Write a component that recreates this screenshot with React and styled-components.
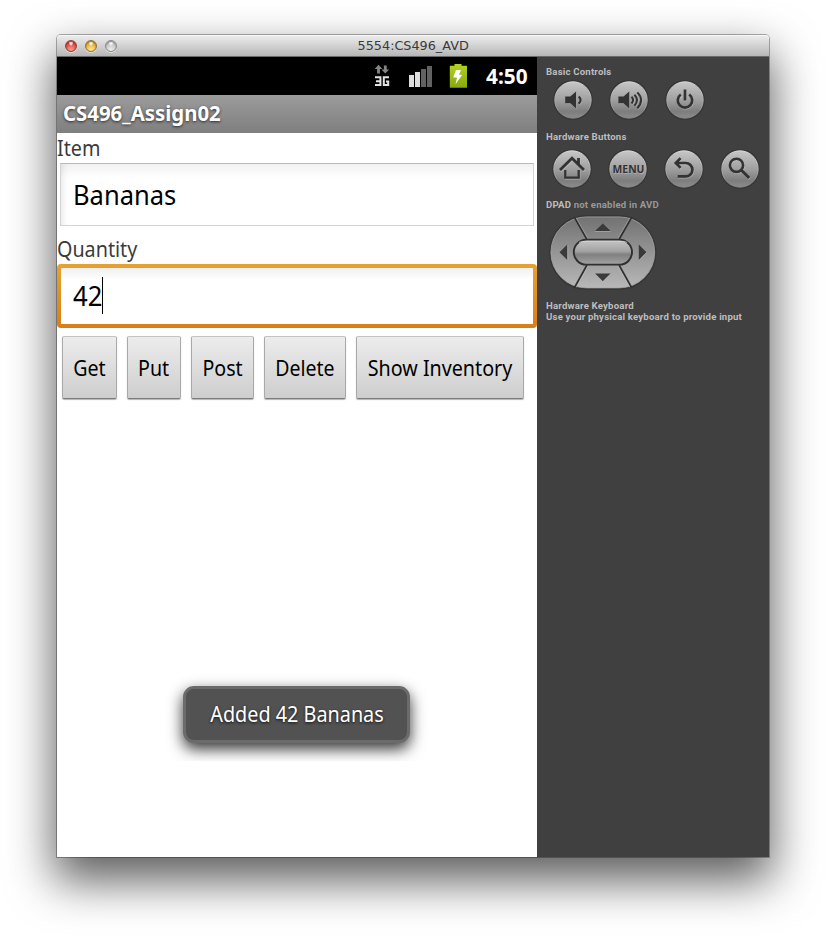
import React from "react";
import styled, { createGlobalStyle } from "styled-components";

const GlobalStyle = createGlobalStyle`
  * { box-sizing: border-box; }
  html, body { margin: 0; background: #fff; }
  body { height: 936px; overflow: hidden; font-family: "Noto Sans", sans-serif; }
`;

const Desktop = styled.main`
  width: 826px;
  height: 936px;
  padding: 35px 57px 0;
  overflow: hidden;
`;

const Window = styled.section`
  width: 712px;
  height: 822px;
  display: flex;
  flex-direction: column;
  border-radius: 4px 4px 0 0;
  box-shadow: 0 0 0 1px rgba(0, 0, 0, 0.3), 0 21px 46px 3px rgba(0, 0, 0, 0.63);
`;

const TitleBar = styled.header`
  flex: none;
  height: 22px;
  display: grid;
  grid-template-columns: 80px 1fr 80px;
  align-items: center;
  border-radius: 4px 4px 0 0;
  border-bottom: 1px solid #6a6a6a;
  background: linear-gradient(#ededed, #d8d8d8 40%, #b6b6b6);
  box-shadow: inset 0 1px 0 #f6f6f6;
`;

const Lights = styled.div`
  display: flex;
  gap: 8px;
  padding-left: 8px;
`;

const Light = styled.i`
  width: 12px;
  height: 12px;
  border-radius: 50%;
  border: 1px solid ${(p) => p.$edge};
  background: radial-gradient(ellipse at 50% 10%, rgba(255, 255, 255, 0.85) 0 18%, transparent 34%),
    radial-gradient(circle at 50% 90%, ${(p) => p.$glow}, ${(p) => p.$tone} 75%);
  box-shadow: 0 1px 0 rgba(255, 255, 255, 0.5), inset 0 1px 1px ${(p) => p.$edge};
`;

const Text = styled.span`
  display: inline-block;
  white-space: pre;
  transform: scaleX(${(p) => p.$stretch || 1});
  transform-origin: ${(p) => p.$origin || "left"} center;
`;

const WindowTitle = styled.div`
  text-align: center;
  font: 12px/20px "DejaVu Sans", sans-serif;
  color: #3a3a3a;
`;

const Body = styled.div`
  flex: 1;
  display: flex;
`;

const Phone = styled.div`
  position: relative;
  width: 480px;
  background: #fff;
`;

const StatusBar = styled.div`
  height: 38px;
  display: flex;
  align-items: center;
  justify-content: flex-end;
  padding-right: 9px;
  background: #000;
`;

const StatusIcons = styled.svg`
  width: 100px;
  height: 38px;
  margin-right: 15px;
`;

const Clock = styled.div`
  width: 42px;
  font: bold 21px/38px "Noto Sans", sans-serif;
  color: #fff;
`;

const AppBar = styled.div`
  height: 38px;
  padding-left: 6px;
  background: linear-gradient(#9b9b9b, #7f7f7f);
  font: bold 21px/36px "Noto Sans", sans-serif;
  color: #fff;
  text-shadow: 0 1px 3px rgba(0, 0, 0, 0.7);
`;

const Label = styled.div`
  height: ${(p) => p.$height}px;
  padding-top: ${(p) => p.$top}px;
  font-size: 21px;
  line-height: 28px;
  color: #3b3b3b;
`;

const Field = styled.div`
  height: 63px;
  margin: 0 3px;
  padding-left: 12px;
  border: 1px solid #d4d4d4;
  border-top-color: #b9b9b9;
  background: linear-gradient(#f1f1f1, #fff 14px);
  box-shadow: inset 8px 0 8px -8px rgba(0, 0, 0, 0.14);
  font-size: 27px;
  line-height: 61px;
  color: #000;
`;

const FocusedField = styled.div`
  display: flex;
  align-items: center;
  height: 64px;
  padding: 4px 4px 4px 16px;
  border-radius: 4px;
  background: linear-gradient(#f0f0f0, #fff 12px) 4px 4px / calc(100% - 8px) calc(100% - 8px) no-repeat,
    linear-gradient(#e6a233, #da7d18);
  font-size: 27px;
  line-height: 54px;
  color: #000;
`;

const Amount = styled.div`
  width: 29px;
`;

const Caret = styled.i`
  width: 1px;
  height: 37px;
  margin-top: -2px;
  background: #000;
`;

const ButtonRow = styled.div`
  display: flex;
  gap: 10px;
  padding: 8px 5px;
`;

const Button = styled.button`
  flex: none;
  width: ${(p) => p.$width}px;
  height: 63px;
  padding: 0;
  display: flex;
  align-items: center;
  justify-content: center;
  border: 1px solid #a9a9a9;
  border-top-color: #c3c3c3;
  border-bottom: 1px solid #7b7b7b;
  border-radius: 2px;
  background: linear-gradient(#ececec, #cecece);
  box-shadow: 0 1px 1px rgba(0, 0, 0, 0.3);
  font: 21px/28px "Noto Sans", sans-serif;
  color: #000;
`;

const ToastLayer = styled.div`
  position: absolute;
  left: 106px;
  top: 604px;
  width: 266px;
  height: 100px;
  padding: 25px 20px 0;
  overflow: hidden;
`;

const Toast = styled.div`
  width: 227px;
  height: 57px;
  display: flex;
  justify-content: center;
  align-items: center;
  padding-bottom: 2px;
  border: 3px solid #6b6b6b;
  border-radius: 11px;
  background: #525252;
  box-shadow: 0 6px 15px rgba(0, 0, 0, 0.8);
  color: #fff;
  font-size: 21px;
  line-height: 28px;
  text-shadow: 0 1px 3px rgba(0, 0, 0, 0.8);
`;

const Sidebar = styled.aside`
  width: 232px;
  padding: 9px 0 0 9px;
  background: #404040;
  color: #bdbdbd;
  font: bold 9.6px/11px Roboto, sans-serif;
  letter-spacing: 0.19px;
`;

const Caption = styled.div`
  height: 11px;
  white-space: nowrap;
`;

const Muted = styled.span`
  color: #989898;
`;

const KeyRow = styled.div`
  display: flex;
  gap: 16px;
  padding-left: ${(p) => p.$inset}px;
  margin: ${(p) => p.$margin};
`;

const Key = styled.svg`
  display: block;
  width: 40px;
  height: 40px;
`;

const Pad = styled.svg`
  display: block;
  margin: 4px 0 9px 2px;
`;

const INK = "#333";

function RoundKey({ children }) {
  return (
    <Key viewBox="0 0 40 40">
      <circle cx="20" cy="20" r="20" fill="#373737" />
      <circle cx="20" cy="20" r="18.2" fill="url(#keyFace)" stroke="url(#keyEdge)" strokeWidth="0.9" />
      <g transform="translate(.6 .8)" opacity="0.35" color="#ddd">{children}</g>
      <g color={INK}>{children}</g>
    </Key>
  );
}

const line = { fill: "none", stroke: "currentColor" };

const VolumeDown = () => (
  <>
    <path d="M12.2 16.6h5.1l5.8-5v17l-5.8-5.4h-5.1z" fill="currentColor" />
    <path d="M25.7 16.6q3.8 3.4 0 7.2" {...line} strokeWidth="2.2" />
  </>
);
const VolumeUp = () => (
  <>
    <path d="M9.4 16.6h5.1l5.8-5v17l-5.8-5.4H9.4z" fill="currentColor" />
    <path d="M22.5 16.7q3.2 3.3 0 6.8M25.4 14.7q5.3 5.3 0 11M28.3 12.4q7.6 7.7 0 15.8" {...line} strokeWidth="2" />
  </>
);
const Power = () => (
  <path d="M15.8 14.5a7.2 7.2 0 1 0 8.4 0M20 9.6v10.8" {...line} strokeWidth="2.7" />
);
const Home = () => (
  <>
    <path d="M8 21.1 20 9.3l12 11.8M26.5 9v6" {...line} strokeWidth="2.8" />
    <path d="M13.3 21v7.7h13.4V21" {...line} strokeWidth="2.3" />
  </>
);
const Back = () => (
  <path d="M16.6 9.1 11.8 14l4.8 4.9M12 14h9.7a6.7 6.7 0 0 1 0 13.4h-8" {...line} strokeWidth="2.7" />
);
const Search = () => (
  <>
    <circle cx="16.5" cy="16.3" r="6.6" {...line} strokeWidth="2.6" />
    <path d="m21.2 21 8 8" {...line} strokeWidth="3.1" />
  </>
);
const Menu = () => (
  <text x="4.6" y="24.2" textLength="32" lengthAdjust="spacing" fill="currentColor" fontFamily="Open Sans, sans-serif" fontWeight="700" fontSize="10.4">MENU</text>
);

function DPad() {
  return (
    <Pad width="110" height="77" viewBox="0 0 110 77">
      <defs>
        <linearGradient id="keyFace" x1="0" y1="0" x2="0" y2="1">
          <stop offset="0" stopColor="#c6c6c6" />
          <stop offset="0.5" stopColor="#a0a0a0" />
          <stop offset="0.82" stopColor="#7d7d7d" />
          <stop offset="1" stopColor="#8c8c8c" />
        </linearGradient>
        <linearGradient id="keyEdge" x1="0" y1="0" x2="0" y2="1">
          <stop offset="0" stopColor="#dedede" />
          <stop offset="1" stopColor="#858585" />
        </linearGradient>
        <linearGradient id="padFace" x1="0" y1="0" x2="0" y2="1">
          <stop offset="0" stopColor="#727272" />
          <stop offset="1" stopColor="#b8b8b8" />
        </linearGradient>
        <linearGradient id="pill" x1="0" y1="0" x2="0" y2="1">
          <stop offset="0" stopColor="#c6c6c6" />
          <stop offset="0.45" stopColor="#a4a4a4" />
          <stop offset="0.6" stopColor="#808080" />
          <stop offset="1" stopColor="#a3a3a3" />
        </linearGradient>
      </defs>
      <rect x="1" y="1" width="107.5" height="75" rx="37.5" fill="#363636" />
      <rect x="2.9" y="2.9" width="103.8" height="71" rx="35.5" fill="url(#padFace)" stroke="#a6a6a6" strokeWidth="0.8" />
      <path d="M26.3 3 39 25.5M83.8 3 71 25.5M39 51 26.3 74M71 51 83.8 74" stroke="#303030" strokeWidth="1.7" />
      <path d="M28 3.6 40.2 25M82 3.6 69.6 25M40.2 52 28.2 73.5M69.8 52 82 73.5" stroke="#bcbcbc" strokeWidth="0.5" />
      <rect x="25.8" y="25.8" width="58.2" height="24.8" rx="12.4" fill="url(#pill)" stroke="#303030" strokeWidth="1.9" />
      <path d="M31 28.4q3-1.3 8-1.3h32q5 0 8 1.3" fill="none" stroke="#ddd" strokeWidth="0.8" />
      <path d="m47 17 7.800-7.600 7.800 7.600zM47 59.500l7.800 7.700 7.800-7.700zM19.300 30.600v15.400L11.500 38.200zM90.800 30.600v15.400l7.600-7.700z" fill="#3a3a3a" />
      <path d="M47 17.5h15.600M19.800 31v15M47.300 60.300l7.500 7.500 7.500-7.500M91.300 46.200l7.300-7.700" fill="none" stroke="#b5b5b5" strokeWidth="0.6" />
    </Pad>
  );
}

export default function App() {
  return (
    <Desktop>
      <GlobalStyle />
      <Window>
        <TitleBar>
          <Lights>
            <Light $tone="#d5382f" $glow="#ffa093" $edge="#93413b" />
            <Light $tone="#dca32c" $glow="#ffec8d" $edge="#95703b" />
            <Light $tone="#bdbdbd" $glow="#eee" $edge="#8b8b8b" />
          </Lights>
          <WindowTitle>
            <Text $origin="center" $stretch={1.065}>5554:CS496_AVD</Text>
          </WindowTitle>
        </TitleBar>
        <Body>
          <Phone>
            <StatusBar>
              <StatusIcons viewBox="371 57 100 38">
                <path d="m378.5 64.8 3.8 4.2h-2.4v4.5h-2.8V69h-2.4zM385.3 73.6l-3.8-4.2h2.4v-4h2.8v4h2.4z" fill="#858585" />
                <path d="M375 77.3h5.4v7.8H375M376 81.2h4.4M389 77.3h-5.2v7.8h4.4v-3.7h-2.2" fill="none" stroke="#e2e2e2" strokeWidth="2" />
                <path d="M409 75h5v12h-5zM415 72h5v15h-5z" fill="#ddd" />
                <path d="M421 69h5v18h-5zM427 66h5v21h-5z" fill="#626262" />
                <defs>
                  <linearGradient id="charge" x1="0" y1="0" x2="0" y2="1">
                    <stop offset="0" stopColor="#b1d321" />
                    <stop offset="1" stopColor="#88a711" />
                  </linearGradient>
                </defs>
                <path d="M454.5 64h7v1.8h5q.5 0 .5.6v20.8q0 .6-.6.6h-16q-.6 0-.6-.6V66.4q0-.6.6-.6h4.1z" fill="url(#charge)" />
                <path d="m456 70 5 .1-2 4.5 3.1.3-6.6 9.3 1.5-6.5-3.8-.4z" fill="#fff" />
              </StatusIcons>
              <Clock><Text $stretch={0.99}>4:50</Text></Clock>
            </StatusBar>
            <AppBar><Text $stretch={0.97}>CS496_Assign02</Text></AppBar>
            <Label $height={30} $top={1}><Text $stretch={0.94}>Item</Text></Label>
            <Field><Text $stretch={0.945}>Bananas</Text></Field>
            <Label $height={38} $top={9}><Text $stretch={0.94}>Quantity</Text></Label>
            <FocusedField>
              <Amount><Text $stretch={0.95}>42</Text></Amount>
              <Caret />
            </FocusedField>
            <ButtonRow>
              <Button $width={55}><Text $origin="center" $stretch={0.935}>Get</Text></Button>
              <Button $width={54}><Text $origin="center" $stretch={0.935}>Put</Text></Button>
              <Button $width={63}><Text $origin="center" $stretch={0.935}>Post</Text></Button>
              <Button $width={82}><Text $origin="center" $stretch={0.93}>Delete</Text></Button>
              <Button $width={168}><Text $origin="center" $stretch={0.938}>Show Inventory</Text></Button>
            </ButtonRow>
            <ToastLayer>
              <Toast><Text $origin="center" $stretch={0.943}>Added 42 Bananas</Text></Toast>
            </ToastLayer>
          </Phone>
          <Sidebar>
            <Caption>Basic Controls</Caption>
            <KeyRow $inset={6.5} $margin="3px 0 11px">
              <RoundKey><VolumeDown /></RoundKey>
              <RoundKey><VolumeUp /></RoundKey>
              <RoundKey><Power /></RoundKey>
            </KeyRow>
            <Caption>Hardware Buttons</Caption>
            <KeyRow $inset={5.5} $margin="6.5px 0 10.5px">
              <RoundKey><Home /></RoundKey>
              <RoundKey><Menu /></RoundKey>
              <RoundKey><Back /></RoundKey>
              <RoundKey><Search /></RoundKey>
            </KeyRow>
            <Caption>DPAD <Muted>not enabled in AVD</Muted></Caption>
            <DPad />
            <Caption>Hardware Keyboard</Caption>
            <Caption>Use your physical keyboard to provide input</Caption>
          </Sidebar>
        </Body>
      </Window>
    </Desktop>
  );
}
